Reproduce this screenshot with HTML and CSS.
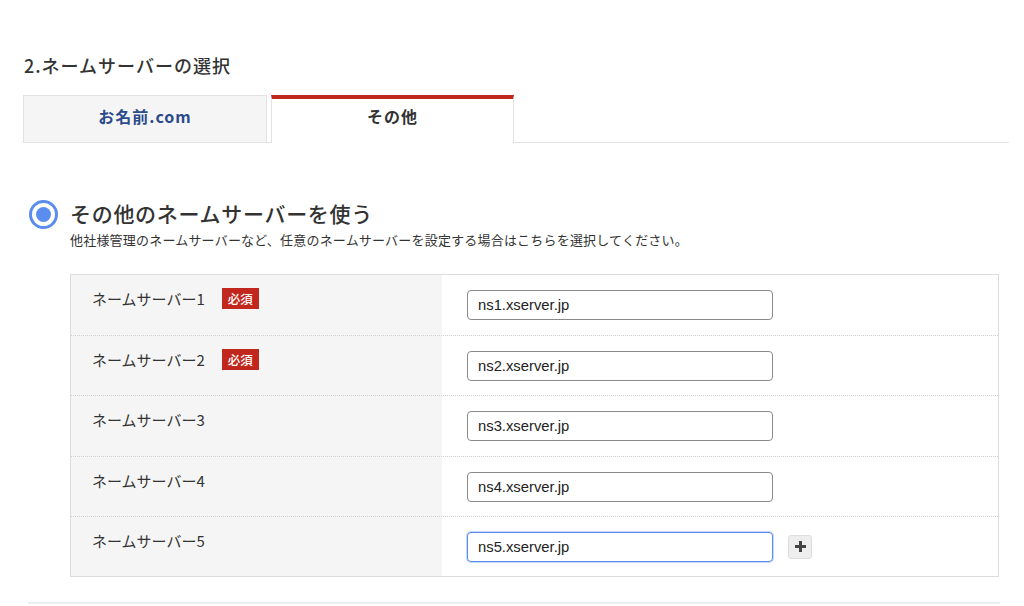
FILE: index.html
```html
<!DOCTYPE html>
<html lang="ja">
<head>
<meta charset="utf-8">
<link rel="stylesheet" href="styles.css">
</head>
<body>
<div class="page">
  <h2 class="heading">2.ネームサーバーの選択</h2>
  <div class="tabs">
    <div class="tab tab-off">お名前.com</div>
    <div class="tab tab-on">その他</div>
  </div>

  <div class="option">
    <div class="radio"><span class="radio-dot"></span></div>
    <div class="option-text">
      <div class="option-title">その他のネームサーバーを使う</div>
      <div class="option-desc">他社様管理のネームサーバーなど、任意のネームサーバーを設定する場合はこちらを選択してください。</div>
    </div>
  </div>

  <div class="table">
    <div class="row">
      <div class="label">ネームサーバー1<span class="badge">必須</span></div>
      <div class="field"><div class="input">ns1.xserver.jp</div></div>
    </div>
    <div class="row">
      <div class="label">ネームサーバー2<span class="badge">必須</span></div>
      <div class="field"><div class="input">ns2.xserver.jp</div></div>
    </div>
    <div class="row">
      <div class="label">ネームサーバー3</div>
      <div class="field"><div class="input">ns3.xserver.jp</div></div>
    </div>
    <div class="row">
      <div class="label">ネームサーバー4</div>
      <div class="field"><div class="input">ns4.xserver.jp</div></div>
    </div>
    <div class="row">
      <div class="label">ネームサーバー5</div>
      <div class="field"><div class="input focus">ns5.xserver.jp</div>
        <div class="plus"><svg width="13" height="13" viewBox="0 0 13 13"><path d="M6.5 1v11M1 6.5h11" stroke="#444" stroke-width="3"/></svg></div>
      </div>
    </div>
  </div>
  <div class="bottom-line"></div>
</div>
</body>
</html>
```

FILE: styles.css
```css
* { box-sizing: border-box; }
html, body { margin: 0; padding: 0; background: #fff; }
body {
  font-family: "Noto Sans CJK JP", "Noto Sans", sans-serif;
  color: #333;
  width: 1024px;
  height: 606px;
  overflow: hidden;
}
.page { padding: 0 0 0 23px; }
.heading {
  margin: 53px 0 0 1px;
  font-size: 18px;
  letter-spacing: 1px;
  font-weight: 500;
  line-height: 24px;
  color: #333;
}
.tabs {
  display: flex;
  align-items: flex-end;
  gap: 4px;
  margin-top: 18px;
  width: 986px;
  border-bottom: 1px solid #e2e2e2;
  height: 48px;
}
.tab {
  display: flex;
  align-items: center;
  justify-content: center;
  font-size: 16px;
  letter-spacing: 1px;
  font-weight: 700;
}
.tab-off {
  width: 244px;
  height: 48px;
  margin-bottom: -1px;
  background: #f5f5f5;
  border: 1px solid #e2e2e2;
  color: #2c4a8c;
  padding-bottom: 6px;
}
.tab-on {
  width: 243px;
  height: 48px;
  margin-bottom: -1px;
  background: #fff;
  border-top: 4px solid #c1271d;
  border-left: 1px solid #e2e2e2;
  border-right: 1px solid #e2e2e2;
  color: #333;
  padding-bottom: 11px;
}
.option {
  display: flex;
  align-items: flex-start;
  margin-top: 57px;
  margin-left: 6px;
}
.radio {
  width: 29px;
  height: 29px;
  border: 3px solid #5b8def;
  border-radius: 50%;
  display: flex;
  align-items: center;
  justify-content: center;
  margin-top: 0;
  flex: none;
}
.radio-dot {
  width: 15px;
  height: 15px;
  border-radius: 50%;
  background: #5b8def;
}
.option-text { margin-left: 12px; margin-top: -2px; }
.option-title {
  font-size: 21px;
  letter-spacing: 0.7px;
  font-weight: 500;
  line-height: 30px;
  color: #333;
}
.option-desc {
  font-size: 13px;
  letter-spacing: 0.2px;
  line-height: 18px;
  margin-top: 3px;
  color: #333;
}
.table {
  margin: 25px 0 0 47px;
  width: 929px;
  border: 1px solid #dcdcdc;
  background: linear-gradient(to right, #f5f5f5 0, #f5f5f5 371px, #fff 371px);
}
.row {
  display: flex;
  height: 60.2px;
  border-top: 1px dotted #cfcfcf;
}
.row:first-child { border-top: none; }
.label {
  width: 371px;
  padding: 13px 0 0 21px;
  font-size: 15px;
  line-height: 22px;
  display: flex;
  align-items: flex-start;
}
.badge {
  background: #c1271d;
  color: #fff;
  font-size: 12.5px;
  line-height: 21px;
  padding: 0 6px;
  margin-left: 17px;
  font-weight: 500;
}
.field {
  display: flex;
  align-items: center;
  padding: 15px 0 0 25px;
  align-self: flex-start;
}
.input {
  width: 306px;
  height: 30px;
  border: 1px solid #8a8a8a;
  border-radius: 4px;
  background: #fff;
  font-family: "Liberation Sans", Arial, sans-serif;
  font-size: 14.8px;
  line-height: 28px;
  padding-left: 10px;
  color: #222;
}
.input.focus {
  border-color: #5b8def;
  box-shadow: 0 0 0 1px rgba(91, 141, 239, 0.35);
}
.plus {
  width: 24px;
  height: 24px;
  margin-left: 15px;
  background: #eeeeee;
  border: 1px solid #dddddd;
  border-radius: 3px;
  display: flex;
  align-items: center;
  justify-content: center;
}
.bottom-line {
  margin: 25px 0 0 5px;
  width: 972px;
  height: 2px;
  background: #eeeeee;
}
```
